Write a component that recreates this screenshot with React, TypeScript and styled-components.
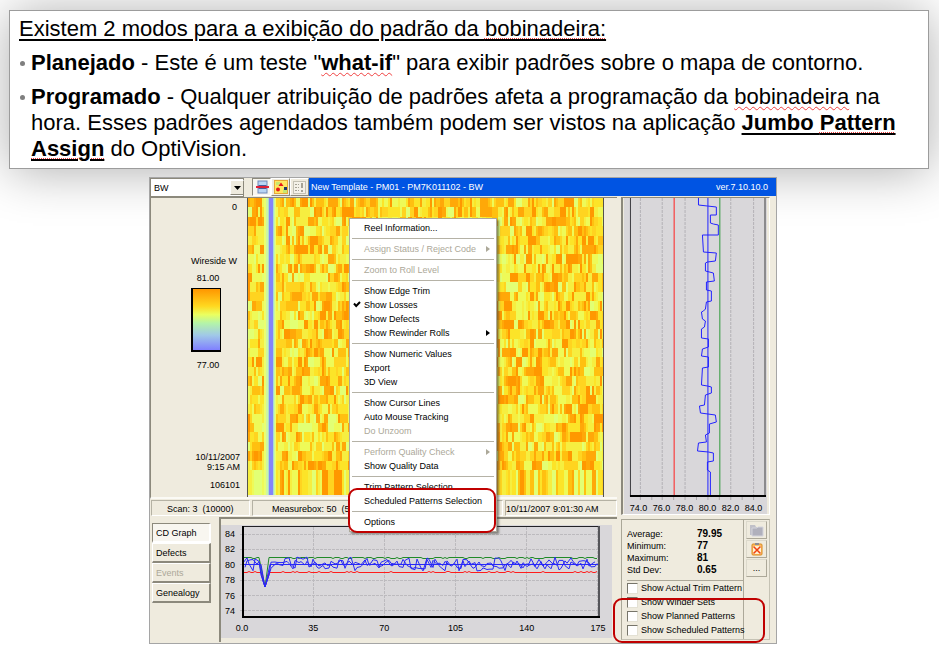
import React, { Fragment } from "react";
import styled, { createGlobalStyle, css } from "styled-components";

const FACE = "#efebde";
const SHADE = "#8c897c";
const PLOT = "#d9d7da";
const RING = "#c00000";

const GlobalStyle = createGlobalStyle`
  *, *::before, *::after { box-sizing: border-box; }
  body {
    margin: 0;
    background: #fff;
    color: #000;
    font-family: "Liberation Sans", Arial, sans-serif;
    overflow-x: hidden;
  }
`;

/* ---------- explanatory card ---------- */

const Page = styled.main`
  padding: 10px 10px 8px 9px;
`;

const Note = styled.section`
  padding: 5px 9px 6px;
  background: #fff;
  border: 1px solid #9c9c9c;
  box-shadow: 0 2px 48px rgba(0, 0, 0, 0.32);
  font-size: 22px;
  line-height: 26px;
`;

const NoteTitle = styled.p`
  margin: 0 0 8px;
  text-decoration: underline;
  text-decoration-thickness: 2px;
  text-underline-offset: 3px;
`;

const NoteList = styled.ul`
  margin: 0;
  padding: 0;
  list-style: none;
`;

const NoteItem = styled.li`
  display: grid;
  grid-template-columns: 12px 1fr;
  & + & { margin-top: 8px; }
  &::before {
    content: "";
    width: 5px;
    height: 5px;
    margin: 11px 0 0 1px;
    border-radius: 50%;
    background: #7f7f7f;
  }
`;

const Misspelled = styled.span`
  text-decoration: underline wavy #f04040 1px;
  text-underline-offset: 2px;
`;

const Flagged = styled.span`
  text-decoration: underline dotted #f04040 1px;
  text-underline-offset: 2px;
`;

const Underlined = styled.strong`
  text-decoration: underline;
  text-decoration-thickness: 2px;
  text-underline-offset: 3px;
`;

/* ---------- application window ---------- */

const Window = styled.section`
  position: relative;
  margin: 8px 152px 0 140px;
  padding-bottom: 1px;
  border: 1px solid #a5a5a5;
  background: ${FACE};
  font-size: 9px;
  line-height: 10px;
`;

const Header = styled.header`
  display: flex;
  height: 19px;
`;

const Picker = styled.div`
  display: grid;
  grid-template-columns: 79px 14px;
  width: 94px;
  margin-right: 8px;
  border: 1px solid ${SHADE};
  background: #fff;
`;

const PickerSelect = styled.select`
  grid-area: 1 / 1 / 2 / 3;
  appearance: none;
  border: 0;
  padding: 0 0 0 3px;
  background: transparent;
  font: 9px/14px "Liberation Sans", Arial, sans-serif;
  color: #000;
`;

const PickerArrow = styled.span`
  grid-area: 1 / 2 / 2 / 3;
  display: grid;
  place-items: center;
  margin: 1px 0;
  border: 1px solid;
  border-color: #fff ${SHADE} ${SHADE} #fff;
  background: ${FACE};
  pointer-events: none;
`;

const Tool = styled.button<{ $on?: boolean }>`
  display: grid;
  place-items: center;
  width: 19px;
  height: 18px;
  padding: 0;
  border: 1px solid;
  border-color: ${(p) => (p.$on ? `${SHADE} #fff #fff ${SHADE}` : `#fff ${SHADE} ${SHADE} #fff`)};
  background: ${(p) => (p.$on ? "#f8f6f0" : FACE)};
`;

const TitleBar = styled.h1`
  flex: 1;
  display: flex;
  justify-content: space-between;
  height: 18px;
  margin: 0;
  padding: 3px 8px 0 2px;
  background: #0054e3;
  color: #fff;
  font-size: 9px;
  font-weight: 400;
  line-height: 12px;
`;

const Body = styled.div`
  display: grid;
  grid-template-columns: 1fr 149px;
  column-gap: 4px;
  padding-right: 6px;
`;

const Column = styled.div`
  display: flex;
  flex-direction: column;
  min-width: 0;
`;

const MapArea = styled.div`
  display: flex;
  height: 302px;
  border-top: 1px solid ${SHADE};
  border-left: 1px solid ${SHADE};
  border-bottom: 2px solid #fbfaf5;
`;

const Legend = styled.aside`
  display: flex;
  flex-direction: column;
  width: 97px;
  padding: 4px 7px 4px 0;
  text-align: right;
  border-right: 1px solid #55534c;
`;

const LegendText = styled.span<{ $top?: number; $right?: number; $center?: boolean }>`
  margin-top: ${(p) => p.$top ?? 0}px;
  padding-right: ${(p) => p.$right ?? 0}px;
  ${(p) =>
    p.$center &&
    css`
      padding-left: 25px;
      text-align: center;
    `}
`;

const Ramp = styled.div`
  width: 30px;
  height: 64px;
  margin: 5px 0 0 40px;
  border: 1px solid #000;
  border-left-width: 2px;
  border-bottom-width: 2px;
  background: linear-gradient(#ff9600, #ffd820 28%, #eaff60 42%, #b4f4a8 56%, #a0c8e8 76%, #8080ff);
`;

const MapFrame = styled.div`
  flex: 1;
  min-width: 0;
  margin-right: 13px;
  border-right: 1px solid #55534c;
`;

const Stretch = styled.svg`
  display: block;
  width: 100%;
  height: 100%;
`;

const MapStretch = styled(Stretch)`
  height: 297px;
`;

const StatusBar = styled.footer`
  display: grid;
  grid-template-columns: 99px 1fr 112px;
  column-gap: 2px;
  margin: 1px 0 1px 1px;
`;

const StatusCell = styled.span<{ $pad?: number }>`
  height: 16px;
  padding: 3px 0 0 ${(p) => p.$pad ?? 0}px;
  border: 1px solid;
  border-color: #b5b2a4 #fff #fff #b5b2a4;
`;

const Lower = styled.div`
  display: grid;
  grid-template-columns: 69px 1fr;
  min-height: 125px;
`;

const Tabs = styled.nav`
  display: flex;
  flex-direction: column;
  padding: 6px 8px 0 2px;
`;

const Tab = styled.button<{ $on?: boolean }>`
  height: 20px;
  padding: 0 0 0 3px;
  border: 1px solid;
  border-color: ${(p) => (p.$on ? `${SHADE} #fff #fff ${SHADE}` : `#fff ${SHADE} ${SHADE} #fff`)};
  border-bottom-width: 2px;
  border-right-width: 2px;
  background: ${(p) => (p.$on ? "#f8f6f0" : FACE)};
  font: 9px/12px "Liberation Sans", Arial, sans-serif;
  text-align: left;
  color: #000;
  &:disabled { color: #aca899; }
`;

const GraphFrame = styled.div`
  padding: 6px 5px 4px 0;
  border-top: 2px solid ${SHADE};
  border-left: 2px solid ${SHADE};
`;

const Graph = styled.div`
  display: grid;
  grid-template: 94px 19px / 21px 1fr;
  background: ${PLOT};
  padding-right: 11px;
`;

const YAxis = styled.div`
  display: flex;
  flex-direction: column;
  justify-content: space-between;
  padding: 4px 7px 3px 0;
  text-align: right;
`;

const XAxis = styled.div`
  grid-column: 2;
  display: flex;
  justify-content: space-between;
  margin: 4px -12px 0 -15px;
  span { width: 30px; text-align: center; }
`;

const ProfileFrame = styled.div`
  height: 318px;
  padding: 0 2px 0 1px;
  border: 1px solid;
  border-color: ${SHADE} #fff #fff ${SHADE};
  border-left-width: 2px;
`;

const Profile = styled.div`
  height: 100%;
  background: ${PLOT};
`;

const ProfilePlot = styled(Stretch)`
  height: 302px;
`;

const ProfileAxis = styled.div`
  display: flex;
  padding: 3px 0 0 3px;
  span { width: 23px; text-align: center; }
`;

const Stats = styled.section`
  position: relative;
  display: grid;
  grid-template-columns: 1fr 25px;
  height: 121px;
  margin-top: 4px;
  border: 1px solid;
  border-color: #aaa798 #c5c2b4 #c5c2b4 #aaa798;
`;

const StatsMain = styled.div`
  min-width: 0;
  padding: 8px 0 0 5px;
  border-right: 1px solid #aca899;
`;

const StatList = styled.dl`
  display: grid;
  grid-template-columns: 70px 1fr;
  margin: 0;
  padding-bottom: 4px;
  border-bottom: 1px solid #aca899;
  line-height: 12px;
  dd { margin: 0; font-size: 10px; font-weight: 700; }
`;

const Check = styled.label`
  display: flex;
  align-items: center;
  height: 14px;
  gap: 3px;
  white-space: nowrap;
`;

const CheckInput = styled.input`
  appearance: none;
  flex: none;
  width: 11px;
  height: 11px;
  margin: 0;
  border: 1px solid;
  border-color: #77756a #e4e1d4 #e4e1d4 #77756a;
  background: #fff;
`;

const SideTools = styled.div`
  display: flex;
  flex-direction: column;
  gap: 1px;
  padding: 1px 0 0 2px;
`;

const SideTool = styled.button`
  display: grid;
  place-items: center;
  width: 21px;
  height: 18px;
  padding: 0;
  border: 1px solid;
  border-color: #dcd9cc #aca899 #aca899 #dcd9cc;
  background: ${FACE};
  font: 9px/9px "Liberation Sans", Arial, sans-serif;
`;

const Ring = styled.div<{ $inset: string }>`
  position: absolute;
  inset: ${(p) => p.$inset};
  border: 2px solid ${RING};
  border-radius: 9px;
  pointer-events: none;
`;

/* ---------- context menu ---------- */

const Menu = styled.div`
  position: absolute;
  left: 199px;
  top: 40px;
  width: 148px;
  padding: 2px;
  border: 1px solid #aca899;
  background: #fff;
  box-shadow: 2px 2px 2px rgba(70, 70, 60, 0.6);
`;

const MenuItem = styled.button`
  display: grid;
  grid-template-columns: 12px 1fr 8px;
  align-items: center;
  width: 100%;
  height: 14px;
  padding: 0;
  border: 0;
  background: transparent;
  font: 9px/12px "Liberation Sans", Arial, sans-serif;
  text-align: left;
  white-space: nowrap;
  color: #000;
  &:disabled { color: #aca899; }
`;

const MenuLine = styled.hr`
  height: 1px;
  margin: 3px 0;
  border: 0;
  background: #b5b2a6;
`;

type Entry = { label: string; off?: boolean; sub?: boolean; checked?: boolean };

const MENU: Entry[][] = [
  [{ label: "Reel Information..." }],
  [{ label: "Assign Status / Reject Code", off: true, sub: true }],
  [{ label: "Zoom to Roll Level", off: true }],
  [
    { label: "Show Edge Trim" },
    { label: "Show Losses", checked: true },
    { label: "Show Defects" },
    { label: "Show Rewinder Rolls", sub: true },
  ],
  [{ label: "Show Numeric Values" }, { label: "Export" }, { label: "3D View" }],
  [{ label: "Show Cursor Lines" }, { label: "Auto Mouse Tracking" }, { label: "Do Unzoom", off: true }],
  [{ label: "Perform Quality Check", off: true, sub: true }, { label: "Show Quality Data" }],
  [{ label: "Trim Pattern Selection" }, { label: "Scheduled Patterns Selection" }],
  [{ label: "Options" }],
];

function ContextMenu() {
  return (
    <Menu role="menu">
      {MENU.map((group, g) => (
        <Fragment key={g}>
          {g > 0 && <MenuLine />}
          {group.map((e) => (
            <MenuItem key={e.label} role="menuitem" disabled={e.off}>
              <span>
                {e.checked && (
                  <svg width="10" height="8" viewBox="0 0 10 8">
                    <path d="M2 3.5L4.2 6L8 2" fill="none" stroke="#000" strokeWidth="2" />
                  </svg>
                )}
              </span>
              <span>{e.label}</span>
              {e.sub && (
                <svg width="4" height="6" viewBox="0 0 4 6">
                  <path d="M0 0L4 3L0 6Z" fill="currentColor" />
                </svg>
              )}
            </MenuItem>
          ))}
        </Fragment>
      ))}
      <Ring $inset="269px 0 -2px -2px" />
    </Menu>
  );
}

/* ---------- heat map ---------- */

function makeRandom(seed: number) {
  let a = seed;
  return () => {
    a = (a + 0x6d2b79f5) | 0;
    let t = Math.imul(a ^ (a >>> 15), 1 | a);
    t = (t + Math.imul(t ^ (t >>> 7), 61 | t)) ^ t;
    return ((t ^ (t >>> 14)) >>> 0) / 4294967296;
  };
}

const HEAT = ["#ff9800", "#ffa808", "#ffc010", "#ffd420", "#fce428", "#f6ee40", "#eefa58", "#e2ff74"];
const HEAT_CUTS = [0.13, 0.25, 0.38, 0.5, 0.63, 0.77, 0.91];
const COLS = 178;
const ROWS = 29;

function buildHeatPaths(): string[] {
  const rnd = makeRandom(20071011);
  const paths = HEAT.map(() => "");
  for (let r = 0; r <= ROWS; r++) {
    const y = Math.round((r * 272) / ROWS);
    const h = (r === ROWS ? 297 : Math.round(((r + 1) * 272) / ROWS)) - y;
    let c = 0;
    let v = rnd();
    while (c < COLS) {
      const roll = rnd();
      const run = Math.min(roll < 0.72 ? 1 : roll < 0.95 ? 2 : 3, COLS - c);
      v = rnd() < 0.25 ? Math.min(0.999, Math.max(0, v + (rnd() - 0.5) * 0.25)) : rnd();
      const found = HEAT_CUTS.findIndex((cut) => v < cut);
      const i = found < 0 ? HEAT.length - 1 : found;
      paths[i] += `M${c * 2} ${y}h${run * 2}v${h}h${-run * 2}z`;
      c += run;
    }
  }
  return paths;
}

const HEAT_PATHS = buildHeatPaths();
const STREAK: [number, number, string][] = [
  [16, 2, "#eaff70"],
  [18, 2, "#ccf6a0"],
  [20, 1, "#a8dcd0"],
  [21, 4, "#8484fa"],
  [25, 1, "#a8dcd0"],
  [26, 1, "#ccf6a0"],
  [27, 1, "#eaff70"],
];

function HeatMap() {
  return (
    <MapStretch viewBox="0 0 355 297" preserveAspectRatio="none" shapeRendering="crispEdges">
      {HEAT_PATHS.map((d, i) => (
        <path key={i} d={d} fill={HEAT[i]} />
      ))}
      {STREAK.map(([x, w, fill]) => (
        <rect key={x} x={x} width={w} height="297" fill={fill} />
      ))}
    </MapStretch>
  );
}

/* ---------- charts ---------- */

const PROFILE_TRACE =
  "75,0 75,7 84,8 93,9 93,17 87,17 87,25 90,26 95,27 95,37 79,37 80,54 93,55 92,63 84,64 82,65 82,73 90,75 91,83 83,84 83,92 88,93 88,103 83,104 82,111 80,113 78,114 79,121 82,123 81,129 78,131 78,140 85,141 85,149 79,151 78,158 85,159 85,169 79,170 78,187 84,188 88,189 88,195 82,197 81,207 76,208 77,215 92,217 93,224 86,226 86,235 82,237 83,244 75,245 74,253 85,254 90,255 90,263 84,264 84,272 87,274 87,297";

function ProfileChart() {
  return (
    <ProfilePlot viewBox="0 0 144 302" preserveAspectRatio="none">
      {[16.5, 38.5, 61.5, 107.5, 130.5].map((x) => (
        <path key={x} d={`M${x} 0V297`} stroke="#b4b2b6" strokeDasharray="3 1" />
      ))}
      <path d="M50.5 0V297" stroke="#ff2020" />
      <path d="M96.5 0V297" stroke="#2f9a3a" />
      <path d="M84.5 0V297" stroke="#2222ff" />
      <polyline points={PROFILE_TRACE} fill="none" stroke="#2222ff" />
      <path d="M6.5 0V298M142 0V298" stroke="#3c3c40" />
      <path d="M6 298H143" stroke="#000" strokeWidth="2" />
      {[16.5, 28, 38.5, 50, 61.5, 73, 84.5, 96, 107.5, 119, 130.5].map((x) => (
        <path key={x} d={`M${x} 299v3`} stroke="#aaa8ac" />
      ))}
    </ProfilePlot>
  );
}

function buildTraces() {
  const rnd = makeRandom(77);
  const noisy: string[] = [];
  const mid: string[] = [];
  const high: string[] = [];
  const low: string[] = [];
  for (let x = 1; x <= 356; x += 2) {
    const dip = x >= 19 && x <= 27;
    const depth = x <= 23 ? (x - 15) / 8 : (31 - x) / 8;
    const noise = 32 + rnd() * 14;
    const calm = 39 + (rnd() - 0.5) * 10;
    noisy.push(`${x},${(dip ? 38 + depth * 24 : noise).toFixed(1)}`);
    mid.push(`${x},${(dip ? 38 + depth * 24 : calm).toFixed(1)}`);
    if (x > 26 || x < 18) high.push(`${x},${(32.5 + (rnd() < 0.3 ? 1 : 0)).toFixed(1)}`);
    if (x > 26 || x < 20) low.push(`${x},${(47.5 - (rnd() < 0.2 ? 1 : 0)).toFixed(1)}`);
    if (dip && x === 23) {
      high.push("23,62");
      low.push("23,62");
    }
  }
  return [
    { points: high.join(" "), color: "#208a28" },
    { points: low.join(" "), color: "#ff1c1c" },
    { points: "1,39.5 19,39.5 23,62 28,39.5 356,39.5", color: "#2828f8" },
    { points: mid.filter((_, i) => i % 3 !== 0).join(" "), color: "#2828f8" },
    { points: noisy.filter((_, i) => i % 3 !== 1).join(" "), color: "#2828f8" },
  ];
}

const TRACES = buildTraces();

function CdGraph() {
  return (
    <Graph>
      <YAxis>
        {[84, 82, 80, 78, 76, 74].map((n) => (
          <span key={n}>{n}</span>
        ))}
      </YAxis>
      <Stretch viewBox="0 0 359 94" preserveAspectRatio="none" overflow="visible">
        {[9.5, 24.5, 39.5, 55.5, 70.5, 85.5].map((y) => (
          <path key={y} d={`M-2 ${y}H358`} stroke="#bcbabe" strokeDasharray="3 1" />
        ))}
        {[71.5, 142.5, 213.5, 284.5, 355.5].map((x) => (
          <path key={x} d={`M${x} 2V94`} stroke="#bcbabe" strokeDasharray="3 1" />
        ))}
        {TRACES.map((t, i) => (
          <polyline key={i} points={t.points} fill="none" stroke={t.color} />
        ))}
        <path d="M0 1.5H358" stroke="#222226" />
        <path d="M1 1V92" stroke="#000" strokeWidth="2" />
        <path d="M357 1V92" stroke="#55555a" strokeWidth="2" />
        <path d="M0 92H358" stroke="#000" strokeWidth="2" />
      </Stretch>
      <XAxis>
        {["0.0", "35", "70", "105", "140", "175"].map((n) => (
          <span key={n}>{n}</span>
        ))}
      </XAxis>
    </Graph>
  );
}

/* ---------- tool icons ---------- */

const TrimIcon = () => (
  <svg width="14" height="14" viewBox="0 0 14 14">
    <rect x="3" y="1" width="9" height="12" fill="#b8d4f4" stroke="#7088b8" />
    <rect x="3.5" y="5" width="8" height="4" fill="#4a5c9c" />
    <rect x="1" y="6" width="13" height="2" fill="#e02038" />
  </svg>
);

const DefectIcon = () => (
  <svg width="14" height="14" viewBox="0 0 14 14">
    <rect x=".5" y=".5" width="13" height="13" fill="#ffe860" stroke="#e8a838" />
    <path d="M2 2h4v3H2zM9 9h4v4H9z" fill="#c8e870" />
    <circle cx="4" cy="9.5" r="2" fill="#e81818" />
    <path d="M7 2.5L9.5 6h-5z" fill="#e81818" />
    <rect x="10" y="7" width="3" height="3" fill="#203868" />
  </svg>
);

const AlertIcon = () => (
  <svg width="13" height="13" viewBox="0 0 13 13" stroke="#a5a295">
    <rect x=".5" y=".5" width="12" height="12" fill="#f4f1e8" stroke="#c4c1b4" />
    <path d="M2 3.5h2M2 6.5h2M2 9.5h2M5 3.5h1M5 6.5h1M5 9.5h1" />
    <path d="M9 2v5M9 9v2" strokeWidth="2" />
  </svg>
);

const FolderIcon = () => (
  <svg width="15" height="13" viewBox="0 0 15 13">
    <path d="M1 1h5l1 2h5v8H1z" fill="#c0c0c8" />
    <path d="M3 4h5l1-1h5v9H3z" fill="#b0b0bc" stroke="#d4d4dc" />
  </svg>
);

const ClipboardIcon = () => (
  <svg width="12" height="14" viewBox="0 0 12 14">
    <rect x="1" y="2" width="10" height="11" rx="1" fill="#ffc060" stroke="#d88820" />
    <rect x="4" y="1" width="4" height="2" fill="#8c8c94" />
    <rect x="2" y="4" width="8" height="8" fill="#fff0d0" />
    <path d="M2.5 4.5l7 7M9.5 4.5l-7 7" stroke="#f04010" strokeWidth="1.5" />
  </svg>
);

const STATS: [string, string][] = [
  ["Average:", "79.95"],
  ["Minimum:", "77"],
  ["Maximum:", "81"],
  ["Std Dev:", "0.65"],
];

const CHECKS = ["Show Actual Trim Pattern", "Show Winder Sets", "Show Planned Patterns", "Show Scheduled Patterns"];

export default function App() {
  return (
    <Page>
      <GlobalStyle />
      <Note>
        <NoteTitle>
          Existem 2 modos para a exibição do padrão da <Flagged>bobinadeira:</Flagged>
        </NoteTitle>
        <NoteList>
          <NoteItem>
            <div>
              <strong>Planejado</strong> - Este é um teste "
              <Misspelled as="strong">what-if</Misspelled>" para exibir padrões sobre o mapa de contorno.
            </div>
          </NoteItem>
          <NoteItem>
            <div>
              <strong>Programado</strong> - Qualquer atribuição de padrões afeta a programação da{" "}
              <Misspelled>bobinadeira</Misspelled> na hora. Esses padrões agendados também podem ser vistos na
              aplicação{" "}
              <Underlined>
                Jumbo <Flagged>Pattern</Flagged> <Flagged>Assign</Flagged>
              </Underlined>{" "}
              do OptiVision.
            </div>
          </NoteItem>
        </NoteList>
      </Note>

      <Window>
        <Header>
          <Picker>
            <PickerSelect aria-label="Measurement" defaultValue="BW">
              <option>BW</option>
            </PickerSelect>
            <PickerArrow>
              <svg width="7" height="4" viewBox="0 0 7 4">
                <path d="M0 0H7L3.5 4Z" />
              </svg>
            </PickerArrow>
          </Picker>
          <Tool $on aria-label="Trim">
            <TrimIcon />
          </Tool>
          <Tool aria-label="Defects">
            <DefectIcon />
          </Tool>
          <Tool aria-label="Alerts">
            <AlertIcon />
          </Tool>
          <TitleBar>
            <span>New Template - PM01 - PM7K011102 - BW</span>
            <span>ver.7.10.10.0</span>
          </TitleBar>
        </Header>

        <Body>
          <Column>
            <MapArea>
              <Legend>
                <LegendText $right={3}>0</LegendText>
                <LegendText $top={44} $right={3}>
                  Wireside W
                </LegendText>
                <LegendText $top={7} $center>
                  81.00
                </LegendText>
                <Ramp />
                <LegendText $top={8} $center>
                  77.00
                </LegendText>
                <LegendText $top={82}>10/11/2007</LegendText>
                <LegendText>9:15 AM</LegendText>
                <LegendText $top={8}>106101</LegendText>
              </Legend>
              <MapFrame>
                <HeatMap />
              </MapFrame>
            </MapArea>
            <StatusBar>
              <StatusCell $pad={15}>Scan: 3&nbsp; (10000)</StatusCell>
              <StatusCell $pad={19}>Measurebox: 50&nbsp; (5</StatusCell>
              <StatusCell>10/11/2007 9:01:30 AM</StatusCell>
            </StatusBar>
            <Lower>
              <Tabs>
                <Tab $on>CD Graph</Tab>
                <Tab>Defects</Tab>
                <Tab disabled>Events</Tab>
                <Tab>Genealogy</Tab>
              </Tabs>
              <GraphFrame>
                <CdGraph />
              </GraphFrame>
            </Lower>
          </Column>

          <Column>
            <ProfileFrame>
              <Profile>
                <ProfileChart />
                <ProfileAxis>
                  {["74.0", "76.0", "78.0", "80.0", "82.0", "84.0"].map((n) => (
                    <span key={n}>{n}</span>
                  ))}
                </ProfileAxis>
              </Profile>
            </ProfileFrame>
            <Stats>
              <StatsMain>
                <StatList>
                  {STATS.map(([name, value]) => (
                    <Fragment key={name}>
                      <dt>{name}</dt>
                      <dd>{value}</dd>
                    </Fragment>
                  ))}
                </StatList>
                {CHECKS.map((label) => (
                  <Check key={label}>
                    <CheckInput type="checkbox" />
                    {label}
                  </Check>
                ))}
              </StatsMain>
              <SideTools>
                <SideTool aria-label="Open">
                  <FolderIcon />
                </SideTool>
                <SideTool aria-label="Clear">
                  <ClipboardIcon />
                </SideTool>
                <SideTool>...</SideTool>
              </SideTools>
              <Ring $inset="78px 4px -4px -9px" />
            </Stats>
          </Column>
        </Body>
        <ContextMenu />
      </Window>
    </Page>
  );
}
